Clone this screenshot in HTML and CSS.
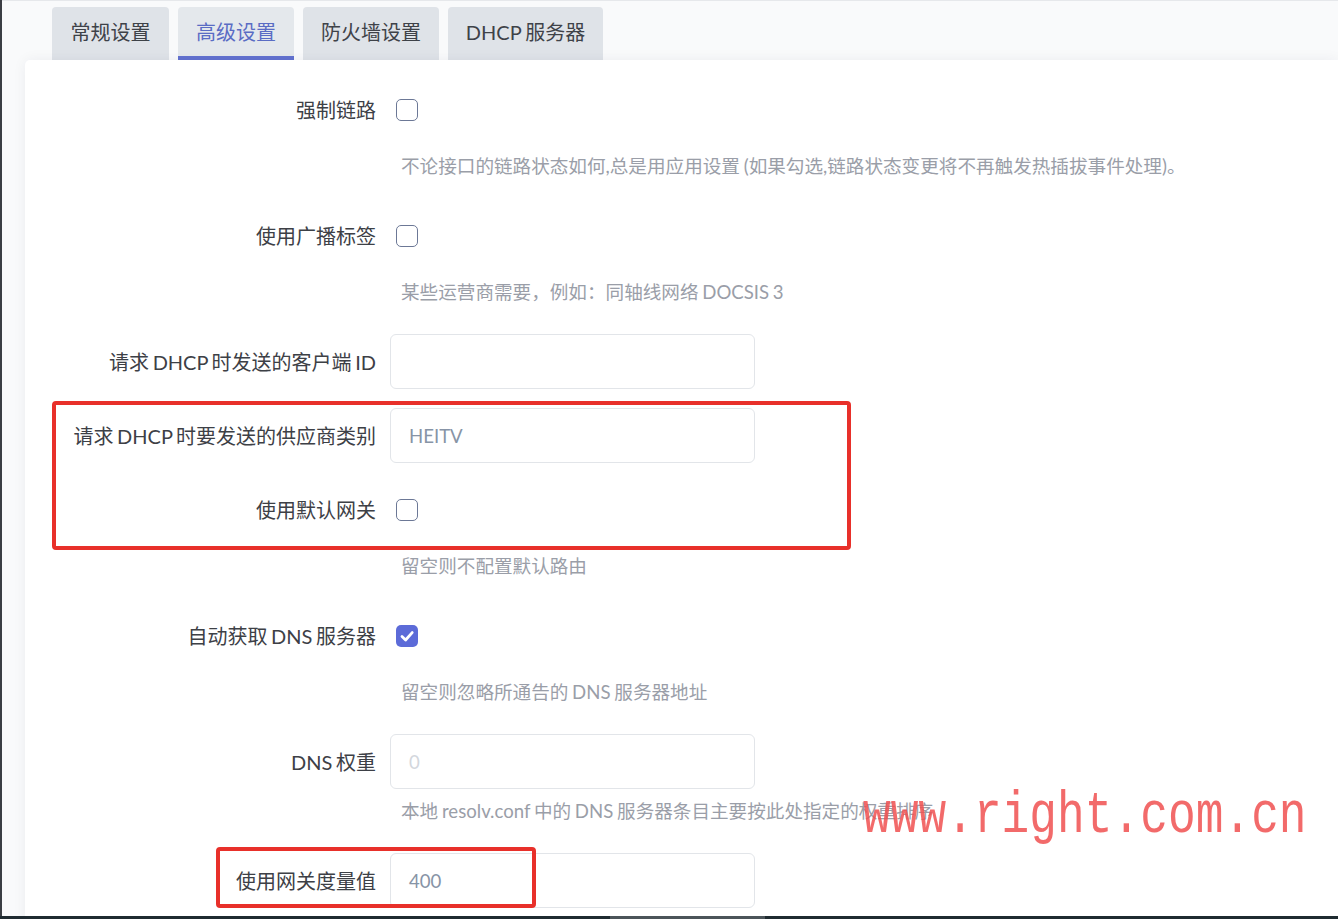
FILE: index.html
```html
<!DOCTYPE html>
<html lang="zh-CN">
<head>
<meta charset="utf-8">
<title>高级设置</title>
<link rel="stylesheet" href="styles.css">
</head>
<body>
<div class="screen">
  <div class="edge"></div>
  <div class="main">
    <div class="tabs">
      <div class="tab">常规设置</div>
      <div class="tab active">高级设置</div>
      <div class="tab">防火墙设置</div>
      <div class="tab">DHCP 服务器</div>
    </div>
    <div class="panel">
      <div class="row">
        <div class="label">强制链路</div>
        <div class="control"><span class="checkbox"></span></div>
        <div class="desc">不论接口的链路状态如何,总是用应用设置 (如果勾选,链路状态变更将不再触发热插拔事件处理)。</div>
      </div>
      <div class="row">
        <div class="label">使用广播标签</div>
        <div class="control"><span class="checkbox"></span></div>
        <div class="desc">某些运营商需要，例如：同轴线网络 DOCSIS 3</div>
      </div>
      <div class="row">
        <div class="label">请求 DHCP 时发送的客户端 ID</div>
        <div class="control"><div class="input"></div></div>
      </div>
      <div class="row">
        <div class="label">请求 DHCP 时要发送的供应商类别</div>
        <div class="control"><div class="input value">HEITV</div></div>
      </div>
      <div class="row">
        <div class="label">使用默认网关</div>
        <div class="control"><span class="checkbox"></span></div>
        <div class="desc">留空则不配置默认路由</div>
      </div>
      <div class="row">
        <div class="label">自动获取 DNS 服务器</div>
        <div class="control"><span class="checkbox checked"><svg viewBox="0 0 22 22" width="22" height="22"><path d="M6 11.5 L9.6 15 L16.2 7.6" fill="none" stroke="#fff" stroke-width="2.8" stroke-linecap="round" stroke-linejoin="round"/></svg></span></div>
        <div class="desc">留空则忽略所通告的 DNS 服务器地址</div>
      </div>
      <div class="row">
        <div class="label">DNS 权重</div>
        <div class="control"><div class="input placeholder">0</div></div>
        <div class="desc desc-tight">本地 resolv.conf 中的 DNS 服务器条目主要按此处指定的权重排序</div>
      </div>
      <div class="row">
        <div class="label">使用网关度量值</div>
        <div class="control"><div class="input value">400</div></div>
      </div>
    </div>
  </div>
</div>
<div class="bottombar"><span class="thumb"></span></div>
<div class="annot annot-1"></div>
<div class="annot annot-2"></div>
<div class="watermark">www.right.com.cn</div>
</body>
</html>
```
FILE: styles.css
```css
html, body {
  margin: 0;
  padding: 0;
  height: 919px;
  overflow: hidden;
}
body {
  font-family: "Lato", "Noto Sans CJK SC", sans-serif;
  background: #f8f9fa;
  position: relative;
  display: flex;
  flex-direction: column;
}
.screen {
  display: flex;
  height: 916px;
  overflow: hidden;
}
.edge {
  width: 2px;
  flex: none;
  background: #3b3e44;
}
.main {
  flex: 1;
  display: flex;
  flex-direction: column;
  border-top: 1px solid #e6e8eb;
  background: #f9fafb;
}
.tabs {
  display: flex;
  gap: 9px;
  padding: 6px 0 0 50px;
  height: 53px;
}
.tab {
  box-sizing: border-box;
  height: 53px;
  padding: 0 18px;
  display: flex;
  align-items: center;
  justify-content: center;
  background: #dfe3e8;
  border-radius: 4px 4px 0 0;
  border-bottom: 4px solid transparent;
  font-size: 20px;
  color: #3e4248;
  white-space: nowrap;
  word-spacing: -1px;
}
.tab:nth-child(1) { width: 117px; }
.tab:nth-child(2) { width: 116px; }
.tab:nth-child(3) { width: 136px; }
.tab:nth-child(4) { width: 155px; }
.tab.active {
  background: #e4e8ec;
  color: #5a6cc4;
  border-bottom-color: #6272d0;
}
.panel {
  flex: 1;
  margin-left: 23px;
  background: #fff;
  border-radius: 5px 0 0 0;
  box-shadow: 0 0 14px rgba(30, 40, 60, 0.06);
  padding-top: 22px;
}
.row {
  display: grid;
  grid-template-columns: 351px 1fr;
  column-gap: 14px;
  margin-bottom: 19px;
}
.label {
  height: 55px;
  display: flex;
  align-items: center;
  justify-content: flex-end;
  font-size: 20px;
  color: #3d4046;
  white-space: nowrap;
  word-spacing: -1.5px;
}
.control {
  height: 55px;
  display: flex;
  align-items: center;
}
.checkbox {
  box-sizing: border-box;
  width: 22px;
  height: 22px;
  margin-left: 6px;
  border: 1.5px solid #6c7896;
  border-radius: 5px;
  background: #fff;
  display: block;
}
.checkbox.checked {
  border: none;
  background: #5c6bd8;
}
.checkbox svg { display: block; }
.input {
  box-sizing: border-box;
  width: 365px;
  height: 55px;
  border: 1px solid #e2e5e9;
  border-radius: 6px;
  padding-left: 18px;
  display: flex;
  align-items: center;
  font-size: 18.6px;
  color: #8794a6;
}
.input.placeholder { color: #d3d7dd; }
.desc {
  grid-column: 2;
  margin-top: 15px;
  margin-bottom: 9px;
  padding-left: 11px;
  line-height: 28px;
  font-size: 18.6px;
  color: #9a9ea8;
  white-space: nowrap;
  word-spacing: -1px;
}
.desc.desc-tight { margin-top: 8px; }
.bottombar {
  height: 3px;
  background: #1f2b31;
  position: relative;
}
.thumb {
  position: absolute;
  left: 610px;
  width: 155px;
  top: 0;
  height: 3px;
  background: #4b5459;
}
.annot {
  position: absolute;
  box-sizing: border-box;
  border: 4px solid #e8302a;
  border-radius: 4px;
}
.annot-1 {
  left: 52px;
  top: 401px;
  width: 799px;
  height: 149px;
}
.annot-2 {
  left: 216px;
  top: 847px;
  width: 320px;
  height: 61px;
}
.watermark {
  position: absolute;
  left: 863px;
  top: 786px;
  font-family: "Liberation Mono", monospace;
  font-size: 60px;
  line-height: 1;
  color: rgba(240, 80, 80, 0.85);
  transform: scaleX(0.77);
  transform-origin: left top;
  white-space: nowrap;
}
```
